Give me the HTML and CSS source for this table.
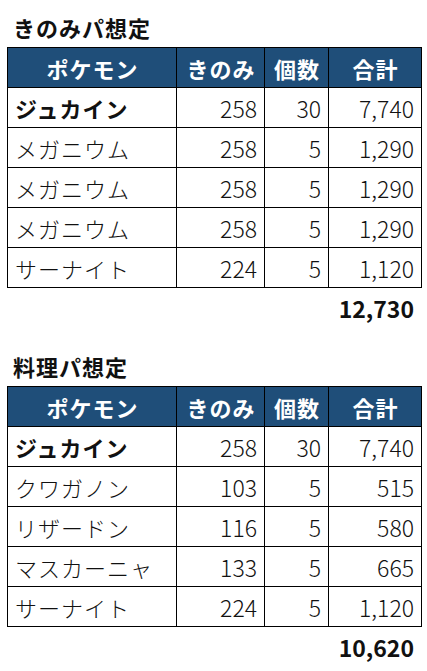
FILE: index.html
```html
<!DOCTYPE html>
<html lang="ja">
<head>
<meta charset="utf-8">
<link rel="stylesheet" href="styles.css">
</head>
<body>
<div class="sheet">
  <section class="block">
    <div class="title">きのみパ想定</div>
    <table class="grid">
      <colgroup><col class="c1"><col class="c2"><col class="c3"><col class="c4"></colgroup>
      <thead>
        <tr><th>ポケモン</th><th>きのみ</th><th>個数</th><th>合計</th></tr>
      </thead>
      <tbody>
        <tr><td class="name bold">ジュカイン</td><td class="num">258</td><td class="num">30</td><td class="num">7,740</td></tr>
        <tr><td class="name">メガニウム</td><td class="num">258</td><td class="num">5</td><td class="num">1,290</td></tr>
        <tr><td class="name">メガニウム</td><td class="num">258</td><td class="num">5</td><td class="num">1,290</td></tr>
        <tr><td class="name">メガニウム</td><td class="num">258</td><td class="num">5</td><td class="num">1,290</td></tr>
        <tr><td class="name">サーナイト</td><td class="num">224</td><td class="num">5</td><td class="num">1,120</td></tr>
      </tbody>
    </table>
    <div class="total">12,730</div>
  </section>
  <section class="block second">
    <div class="title">料理パ想定</div>
    <table class="grid">
      <colgroup><col class="c1"><col class="c2"><col class="c3"><col class="c4"></colgroup>
      <thead>
        <tr><th>ポケモン</th><th>きのみ</th><th>個数</th><th>合計</th></tr>
      </thead>
      <tbody>
        <tr><td class="name bold">ジュカイン</td><td class="num">258</td><td class="num">30</td><td class="num">7,740</td></tr>
        <tr><td class="name">クワガノン</td><td class="num">103</td><td class="num">5</td><td class="num">515</td></tr>
        <tr><td class="name">リザードン</td><td class="num">116</td><td class="num">5</td><td class="num">580</td></tr>
        <tr><td class="name">マスカーニャ</td><td class="num">133</td><td class="num">5</td><td class="num">665</td></tr>
        <tr><td class="name">サーナイト</td><td class="num">224</td><td class="num">5</td><td class="num">1,120</td></tr>
      </tbody>
    </table>
    <div class="total">10,620</div>
  </section>
</div>
</body>
</html>
```

FILE: styles.css
```css
html, body {
  margin: 0;
  padding: 0;
  background: #ffffff;
}
body {
  font-family: "Noto Sans CJK JP", "Noto Sans", sans-serif;
  color: #111111;
}
.sheet {
  padding: 7px 6px 0 7px;
  display: flex;
  flex-direction: column;
}
.block {
  display: flex;
  flex-direction: column;
}
.second {
  margin-top: 18px;
}
.title {
  height: 40px;
  line-height: 40px;
  font-size: 22px;
  font-weight: 700;
  letter-spacing: 1px;
  padding-left: 6px;
}
.grid {
  border-collapse: collapse;
  width: 414px;
  table-layout: fixed;
}
.c1 { width: 169px; }
.c2 { width: 88px; }
.c3 { width: 64px; }
.c4 { width: 93px; }
.grid th,
.grid td {
  border: 1px solid #000000;
  height: 40px;
  padding: 0 7px;
  box-sizing: border-box;
  white-space: nowrap;
  overflow: hidden;
}
.grid th {
  background: #1f4e79;
  color: #ffffff;
  font-size: 22px;
  font-weight: 700;
  text-align: center;
  letter-spacing: 1px;
  padding: 0 0 0 1px;
}
.name {
  font-size: 22px;
  font-weight: 300;
  letter-spacing: 1px;
  text-align: left;
}
.bold {
  font-weight: 700;
}
.num {
  font-size: 23px;
  font-weight: 300;
  text-align: right;
}
.total {
  height: 40px;
  line-height: 40px;
  width: 414px;
  box-sizing: border-box;
  padding-right: 7px;
  text-align: right;
  font-size: 23px;
  font-weight: 700;
}
```
